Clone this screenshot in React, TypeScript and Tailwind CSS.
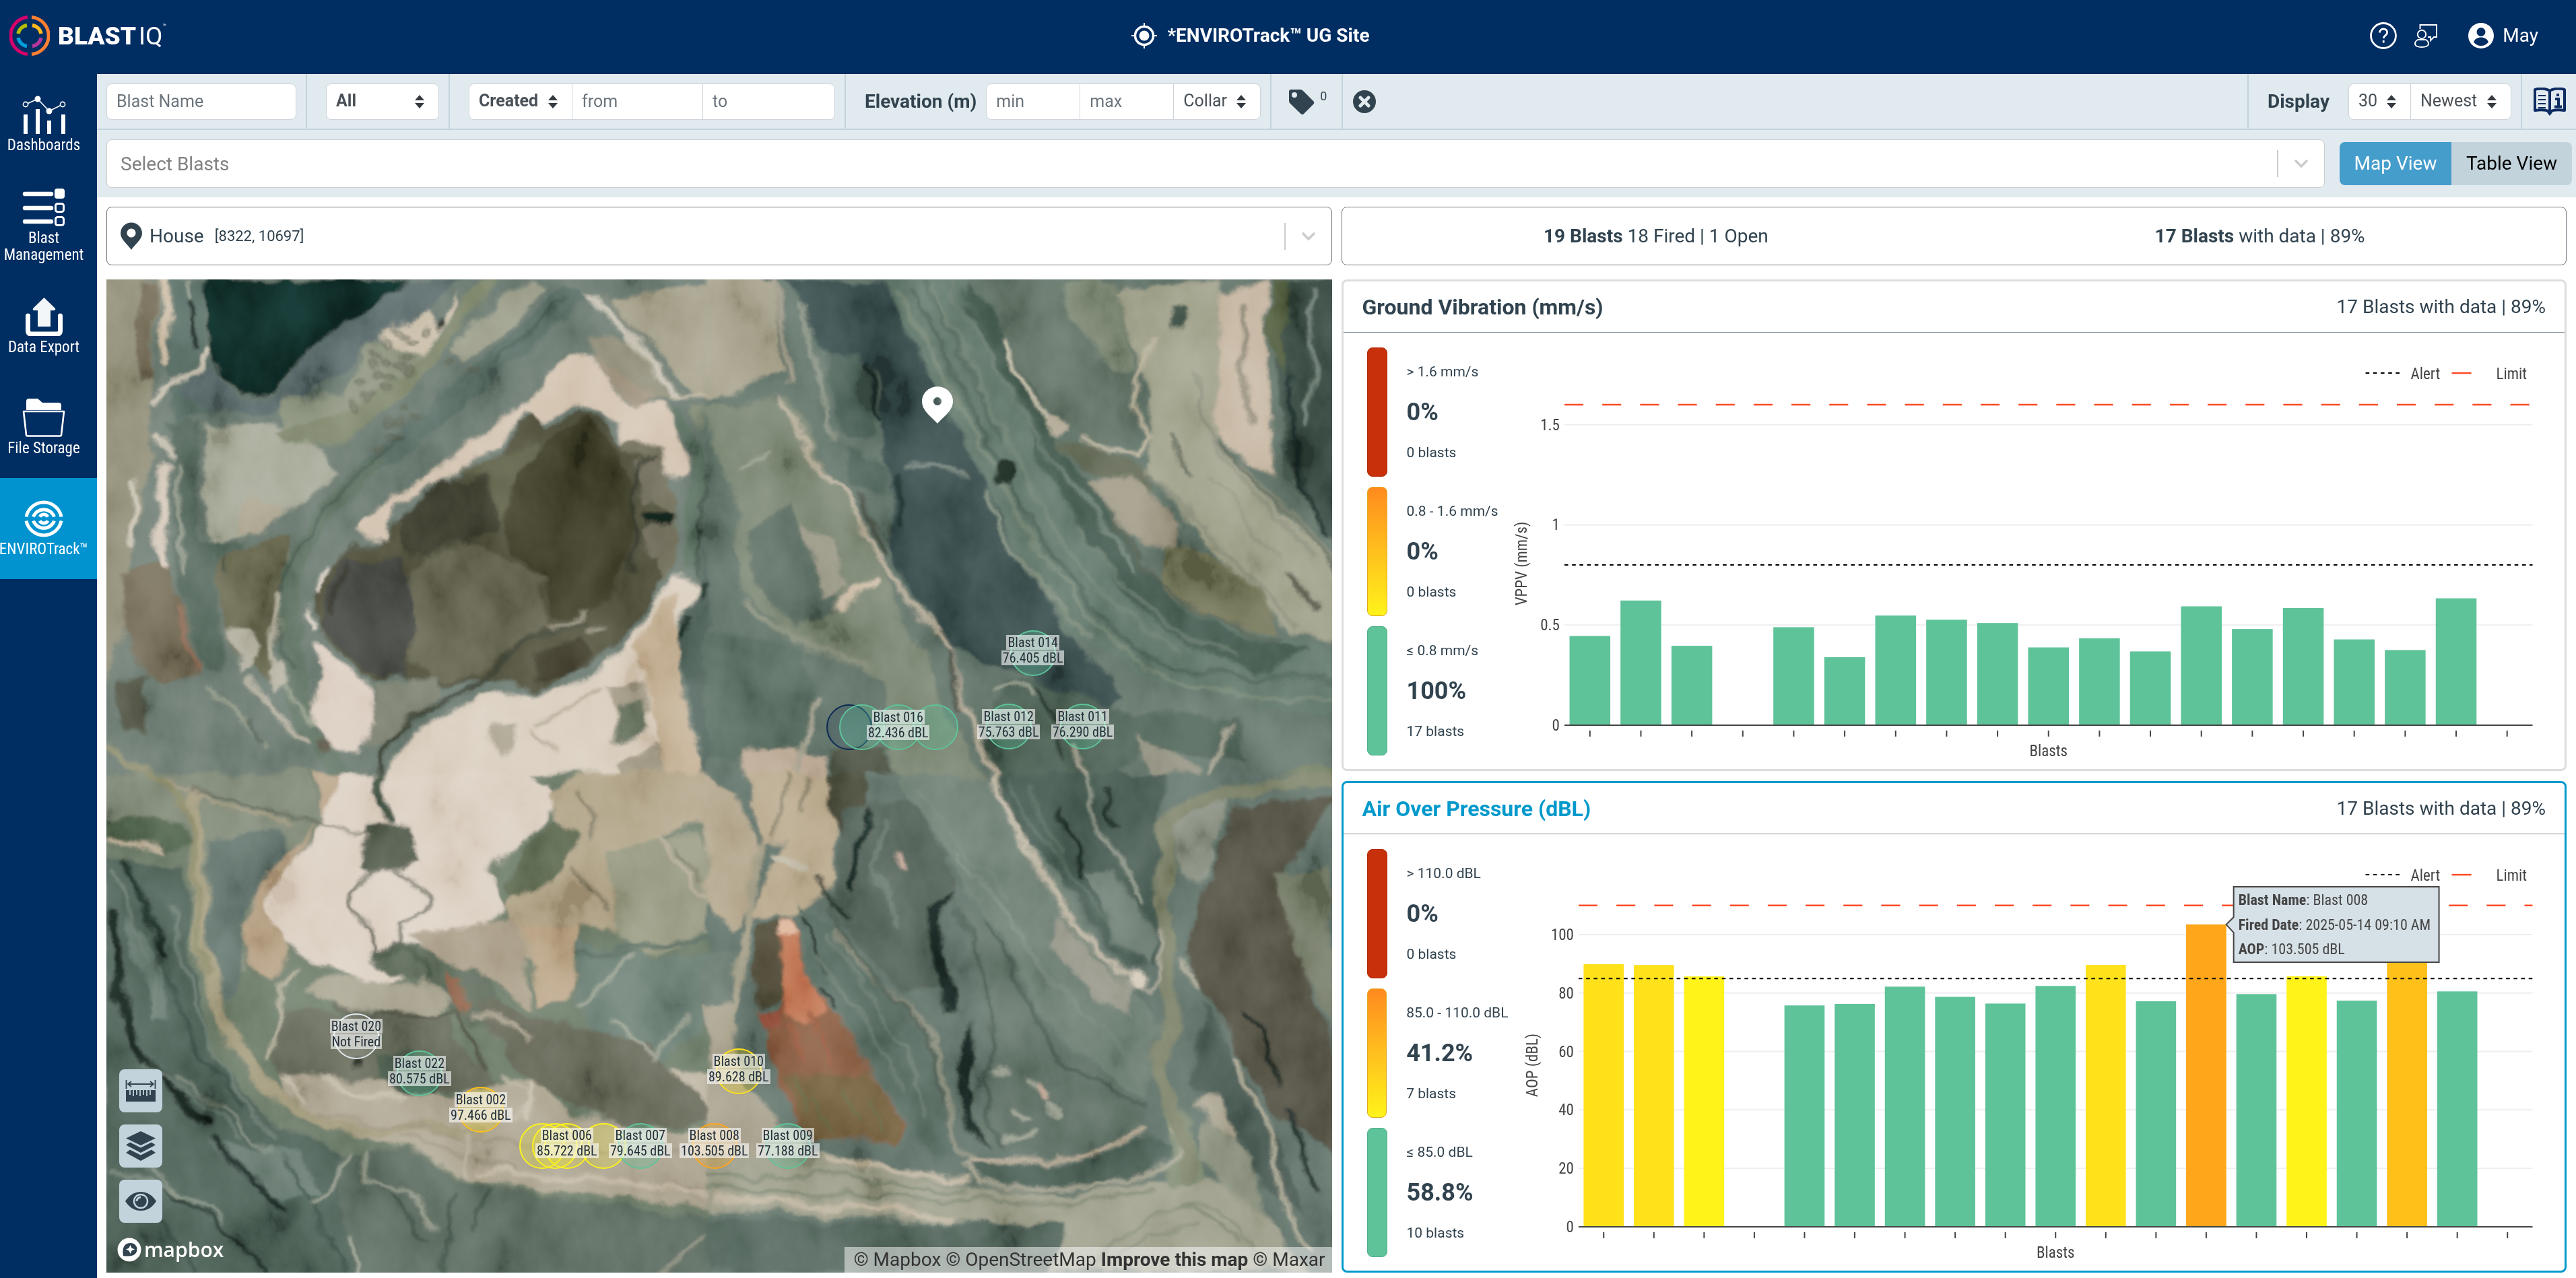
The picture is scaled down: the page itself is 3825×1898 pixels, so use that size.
import React from "react";

const FONT = "font-[Roboto,'Liberation_Sans',sans-serif]";
const CONDENSED = "font-['Roboto_Condensed',Roboto,sans-serif]";

/* ---------- header ---------- */

function BrandMark() {
  return (
    <svg viewBox="0 0 60 60" className="h-[60px] w-[60px]" fill="none" aria-hidden="true">
      <path d="M27 2.6A27.5 27.5 0 0 0 27 57.4" stroke="#d6006c" strokeWidth="5" />
      <path d="M33 2.6A27.5 27.5 0 0 1 33 57.4" stroke="#ff7f32" strokeWidth="5" />
      <path d="M26 14.5A16 16 0 0 0 13 27" stroke="#b5bd00" strokeWidth="5.5" />
      <path d="M34 14.5A16 16 0 0 1 47 27" stroke="#ffb81c" strokeWidth="5.5" />
      <path d="M26 45.5A16 16 0 0 1 13 33" stroke="#009ddb" strokeWidth="5.5" />
      <path d="M34 45.5A16 16 0 0 0 47 33" stroke="#b5379c" strokeWidth="5.5" />
    </svg>
  );
}

function Header() {
  return (
    <header className="grid h-[110px] shrink-0 grid-cols-3 items-center bg-[#002d62] pb-1 text-white">
      <a href="#home" className="flex items-center gap-3 pl-3.5" aria-label="BlastIQ">
        <BrandMark />
        <span className="flex items-center text-[37px] leading-none">
          <span className="font-black">BLAST</span>
          <span className="pl-1">IQ</span>
          <span className="self-start text-[9px]">™</span>
        </span>
      </a>
      <div className="flex items-center justify-center gap-3.5 pr-28">
        <svg viewBox="0 0 40 40" className="h-10 w-10" fill="none" aria-hidden="true">
          <circle cx="20" cy="20" r="13.5" stroke="#fff" strokeWidth="3.5" />
          <circle cx="20" cy="20" r="7.5" fill="#fff" />
          <path d="M20 1v6M20 33v6M1 20h6M33 20h6" stroke="#fff" strokeWidth="2" />
        </svg>
        <h1 className="text-[28px] leading-none font-bold whitespace-nowrap">*ENVIROTrack™ UG Site</h1>
      </div>
      <div className="flex items-center justify-end pr-14">
        <button type="button" aria-label="Help" className="mr-6">
          <svg viewBox="0 0 42 42" className="h-[42px] w-[42px]" fill="none" aria-hidden="true">
            <circle cx="21" cy="21" r="18.5" stroke="#fff" strokeWidth="2.8" />
            <path d="M15.5 16.5c0-3.5 2.4-5.5 5.6-5.5s5.6 2 5.6 5c0 4.600-5.500 4.500-5.500 9" stroke="#fff" strokeWidth="2.8" />
            <path d="M21.200 28v3.500" stroke="#fff" strokeWidth="2.8" />
          </svg>
        </button>
        <button type="button" aria-label="Feedback" className="mr-11">
          <svg viewBox="0 0 36 38" className="h-[38px] w-9" fill="none" stroke="#fff" strokeWidth="2" aria-hidden="true">
            <path d="M9.500 9V3H34v18h-4l-5 5v-5h-4" />
            <circle cx="12" cy="17" r="6.200" />
            <path d="M6 25h12c2.500 1.500 4 4 4 6 0 3-4 5-10 5s-10-2-10-5c0-2 1.500-4.500 4-6z" />
          </svg>
        </button>
        <button type="button" className="flex items-center gap-3 text-[28px] leading-none">
          <svg viewBox="0 0 40 40" className="h-10 w-10" aria-hidden="true">
            <circle cx="20" cy="20" r="19" fill="#fff" />
            <circle cx="20" cy="14.500" r="6.500" fill="#002d62" />
            <path d="M9 29.500c2-5 6-7 11-7s9 2 11 7c-2.500 3.500-6.500 5.500-11 5.500s-8.500-2-11-5.500z" fill="#002d62" />
          </svg>
          May
        </button>
      </div>
    </header>
  );
}

/* ---------- sidebar ---------- */

const navIcons: Record<string, React.ReactNode> = {
  dashboards: (
    <g>
      <path d="M5 13L23 5L40 23L60 13" stroke="#fff" strokeWidth="1.600" fill="none" />
      <circle cx="5" cy="13" r="3.600" fill="#002d62" stroke="#fff" strokeWidth="1.600" />
      <circle cx="23" cy="5" r="4.500" fill="#fff" />
      <circle cx="40" cy="23" r="4.500" fill="#fff" />
      <circle cx="60" cy="13" r="3.600" fill="#002d62" stroke="#fff" strokeWidth="1.600" />
      <path d="M2 28h6v29H2zM20 20h6v37h-6zM37 37h6v20h-6zM58 28h6v29h-6z" fill="#fff" />
    </g>
  ),
  management: (
    <g>
      <path d="M4 8h39M4 29h39M4 49h39" stroke="#fff" strokeWidth="6.500" strokeLinecap="round" />
      <rect x="48" y="0" width="15" height="15" rx="4" fill="#fff" />
      <rect x="49.500" y="22.500" width="12" height="12" rx="3" fill="none" stroke="#fff" strokeWidth="3" />
      <rect x="49.500" y="42.500" width="12" height="12" rx="3" fill="none" stroke="#fff" strokeWidth="3" />
    </g>
  ),
  exporting: (
    <g>
      <path d="M8.500 27v22q0 5 5 5h38q5 0 5-5V27" stroke="#fff" strokeWidth="7" strokeLinecap="round" fill="none" />
      <path d="M32.500 0L49 16q1 3-2 3h-5v24H23V19h-5q-3 0-2-3z" fill="#f3f6f8" />
    </g>
  ),
  storage: (
    <g>
      <path d="M6 17V4q0-4 4-4h13l7 6h24q4 0 4 4v7z" fill="#fff" />
      <path d="M2 19h60l-4 35q0 1.500-2 1.500H8q-2 0-2-1.500z" fill="none" stroke="#fff" strokeWidth="2.600" strokeLinejoin="round" />
    </g>
  ),
  enviro: (
    <g fill="none" stroke="#fff" strokeWidth="5">
      <path d="M6 25.500A26.500 26.500 0 0 1 58 25.500M58 31.500A26.500 26.500 0 0 1 6 31.500" />
      <path d="M16.500 25.500A16.500 16.500 0 0 1 47.500 25.500M47.500 31.500A16.500 16.500 0 0 1 16.500 31.500" />
      <path d="M26 25.500A7 7 0 0 1 38 25.500M38 31.500A7 7 0 0 1 26 31.500" />
    </g>
  ),
};

const navItems = [
  { icon: "dashboards", label: "Dashboards" },
  { icon: "management", label: "Blast Management" },
  { icon: "exporting", label: "Data Export" },
  { icon: "storage", label: "File Storage" },
  { icon: "enviro", label: "ENVIROTrack™", active: true },
];

function Sidebar() {
  return (
    <nav className={"w-36 shrink-0 bg-[#002d62] text-white " + CONDENSED}>
      {navItems.map((n) => (
        <a
          key={n.icon}
          href={"#" + n.icon}
          className={
            "flex h-[150px] flex-col items-center justify-center gap-1 pr-3.5 text-center text-[23px] leading-[25px] " +
            (n.active ? "bg-[#0093d0]" : "")
          }
        >
          <svg viewBox="0 0 65 57" className="h-[57px] w-[65px]" aria-hidden="true">
            {navIcons[n.icon]}
          </svg>
          <span>{n.label}</span>
        </a>
      ))}
    </nav>
  );
}

/* ---------- filter bar ---------- */

function PickList({ label, value, className }: { label: string; value: string; className: string }) {
  return (
    <span className={"relative block h-full " + className}>
      <select
        aria-label={label}
        className="h-full w-full appearance-none bg-transparent pb-0.5 pl-3.5 text-[#495057] outline-none"
        defaultValue={value}
      >
        <option>{value}</option>
      </select>
      <svg viewBox="0 0 16 20" className="pointer-events-none absolute top-1/2 right-5 h-5 w-4 -translate-y-1/2" aria-hidden="true">
        <path d="M8 0L15 8H1zM8 20L1 12H15z" fill="#343a40" />
      </svg>
    </span>
  );
}

const box = "flex h-[54px] overflow-hidden rounded-lg border border-[#ced4da] bg-white";
const cell = "flex h-full items-center border-[#c2d3dc]";
const field = "h-full min-w-0 bg-transparent px-3.5 placeholder-[#6c757d] outline-none";

function Chevron() {
  return (
    <span className="flex items-center">
      <span className="h-10 w-0.5 bg-[#cccccc]" />
      <svg viewBox="0 0 24 24" className="mx-[22px] h-6 w-6" fill="none" stroke="#cccccc" strokeWidth="3.600" strokeLinecap="round" aria-hidden="true">
        <path d="M4 8l8 8 8-8" />
      </svg>
    </span>
  );
}

function Filters() {
  return (
    <div className="bg-[#e1eaef]">
      <form className="flex h-[83px] items-center border-b-2 border-[#c2d3dc] text-[25px] text-[#31434f]">
        <div className={cell + " border-r-2 px-3.5"}>
          <div className={box}>
            <input aria-label="Blast Name" placeholder="Blast Name" className={field + " w-[280px]"} />
          </div>
        </div>
        <div className={cell + " border-r-2 pr-3.5 pl-7"}>
          <div className={box + " font-bold"}>
            <PickList label="Status" value="All" className="w-[166px]" />
          </div>
        </div>
        <div className={cell + " border-r-2 pr-3.5 pl-7"}>
          <div className={box}>
            <PickList label="Date type" value="Created" className="w-[152px] font-bold" />
            <input aria-label="From date" placeholder="from" className={field + " w-[195px] border-x border-[#ced4da]"} />
            <input aria-label="To date" placeholder="to" className={field + " w-[195px]"} />
          </div>
        </div>
        <div className={cell + " gap-3.5 border-r-2 pr-3.5 pl-7"}>
          <span className="text-[28px] font-bold whitespace-nowrap">Elevation (m)</span>
          <div className={box}>
            <input aria-label="Minimum elevation" placeholder="min" className={field + " w-[138px]"} />
            <input aria-label="Maximum elevation" placeholder="max" className={field + " w-[140px] border-x border-[#ced4da]"} />
            <PickList label="Elevation reference" value="Collar" className="w-[128px]" />
          </div>
        </div>
        <div className={cell + " border-r-2 pr-[22px] pl-6"}>
          <button type="button" className="flex items-start gap-2" aria-label="Tags: 0">
            <svg viewBox="0 0 40 40" className="h-10 w-10" aria-hidden="true">
              <path d="M2 5q0-3 3-3h14q2 0 4 2l15 15q2.500 2.500 0 5L24 38q-2 2-4.500 0L4 23q-2-2-2-4z" fill="#31434f" />
              <circle cx="10" cy="10" r="4" fill="#e1eaef" />
            </svg>
            <span className="text-lg leading-6">0</span>
          </button>
        </div>
        <div className={cell + " px-3.5"}>
          <button type="button" aria-label="Clear filters">
            <svg viewBox="0 0 36 36" className="h-9 w-9" aria-hidden="true">
              <circle cx="18" cy="18" r="17" fill="#31434f" />
              <path d="M12 12l12 12M24 12L12 24" stroke="#e1eaef" strokeWidth="5" strokeLinecap="round" />
            </svg>
          </button>
        </div>
        <div className="flex-1" />
        <div className={cell + " gap-7 border-l-2 pr-3.5 pl-7"}>
          <span className="text-[28px] font-bold">Display</span>
          <div className={box}>
            <PickList label="Display count" value="30" className="w-[92px] border-r border-[#ced4da]" />
            <PickList label="Display order" value="Newest" className="w-[148px]" />
          </div>
        </div>
        <div className={cell + " border-l-2 pr-3.5 pl-4"}>
          <button type="button" aria-label="Guide">
            <svg viewBox="0 0 50 42" className="h-[42px] w-[50px]" fill="none" stroke="#0f2d62" aria-hidden="true">
              <path d="M25 5C20 1 8 1 3 3v31c7-1 17-1 22 2 5-3 15-3 22-2V3c-5-2-17-2-22 2z" strokeWidth="4" strokeLinejoin="round" />
              <path d="M25 5v31" strokeWidth="4" />
              <path d="M8 12h11M8 18h11M8 24h11M8 30h11" strokeWidth="2.200" />
              <path d="M37 9v4M33 17h5v11M32 28.500h11" strokeWidth="4" />
              <path d="M21 37l4 5 4-5z" fill="#0f2d62" stroke="none" />
            </svg>
          </button>
        </div>
      </form>
      <div className="flex h-[100px] items-center pr-1.5 pl-3.5 text-[28px]">
        <div className="flex h-[72px] flex-1 items-center justify-between rounded-lg border border-[#cccccc] bg-white pl-5 text-[#808080]">
          <input aria-label="Select Blasts" placeholder="Select Blasts" className="h-full flex-1 bg-transparent placeholder-[#808080] outline-none" />
          <Chevron />
        </div>
        <div className="ml-[22px] flex h-16 overflow-hidden rounded-lg">
          <button type="button" className="w-[166px] bg-[#459dcb] text-white">Map View</button>
          <button type="button" className="w-[179px] bg-[#c2d3dc] text-black">Table View</button>
        </div>
      </div>
    </div>
  );
}

/* ---------- map ---------- */

function Shapes({ items }: { items: [string, string][] }) {
  return (
    <>
      {items.map(([fill, d], i) => (
        <path key={i} d={d} fill={fill} />
      ))}
    </>
  );
}

function Trails({ items }: { items: [string, number, string][] }) {
  return (
    <g fill="none" strokeLinejoin="round" strokeLinecap="round">
      {items.map(([stroke, w, d], i) => (
        <path key={i} d={d} stroke={stroke} strokeWidth={w} />
      ))}
    </g>
  );
}

function NorthWest() {
  return (
    <g transform="translate(61.5 164) scale(.2614 .196)">
      <Shapes
        items={[
          ["#6a796f", "M0 0H1600V1600H0Z"],
          ["#908d77", "M0 0L135 31L110 400L120 560L90 800L60 1100L0 1300Z"],
          ["#6f6853", "M90 31L130 31L112 360L85 360ZM50 950L150 900L190 1050L230 1260L150 1300L60 1200Z"],
          ["#566c64", "M160 31L245 31L250 240L300 430L180 480L150 300Z"],
          ["#57695d", "M155 480L230 480L225 850L330 850L280 1000L280 1240L230 1230L180 980Z"],
          ["#5a6b6a", "M720 31L860 31L760 110L640 240L520 360L400 440L240 440L180 380L250 300L320 400L400 390L490 240Z"],
          ["#0d2723", "M245 31L720 31L640 110L490 240L400 380L320 388L275 330L255 230Z"],
          ["#a5a796", "M245 480L400 470L520 560L560 620L430 760L320 830L250 850L240 740Z"],
          ["#aba48f", "M350 720L440 740L360 830L300 820ZM390 880L440 880L420 940L370 930Z"],
          ["#8a917b", "M420 400L560 400L620 240L700 220L780 260L700 400L560 470L430 520Z"],
          ["#c9bda8", "M650 220L750 110L790 190L840 90L830 150L740 270Z"],
          ["#7b8469", "M890 31L930 31L800 260L680 420L560 540L430 540L400 500L560 450L700 330L820 170Z"],
          ["#9a9c88", "M930 80L1000 31L1040 60L960 180L850 280L820 250Z"],
          ["#a5a08a", "M1180 110L1300 60L1568 31L1568 400L1380 390L1280 230Z"],
          ["#828b74", "M1380 420L1568 400L1568 600L1420 560Z"],
          ["#8d8a76", "M1140 200L1240 210L1330 400L1240 420L1160 300Z"],
          ["#d3c3b0", "M1100 260L1150 280L1230 420L1320 420L1340 500L1370 640L1340 650L1220 560L1210 480L1100 430L1030 470L1000 430L930 540L800 640L680 740L660 860L590 820L600 790L780 620L900 500L1000 400L1060 300Z"],
          ["#9b8f7a", "M1150 270L1200 290L1290 400L1240 430Z"],
          ["#6c6a55", "M1230 520L1300 560L1340 700L1340 900L1320 960L1210 1000L1180 600Z"],
          ["#4b4b37", "M1010 440L1040 485L1110 450L1180 480L1220 560L1290 590L1260 680L1330 760L1280 850L1310 950L1290 1040L1210 1140L1120 1250L1000 1300L900 1270L780 1300L700 1260L630 1280L560 1190L500 1110L490 1020L550 920L590 860L660 860L700 760L800 650L940 560L980 470Z"],
          ["#56583f", "M830 620L950 560L1010 540L1030 640L950 680L910 800L900 640Z"],
          ["#37382a", "M700 760L790 650L900 640L920 820L820 850L760 900L700 880Z"],
          ["#3b3b28", "M1050 520L1130 470L1210 560L1240 700L1230 900L1200 1000L1120 1080L1050 1080L1020 940L950 880L930 780L950 660Z"],
          ["#3c403b", "M560 920L700 890L740 1000L710 1260L640 1265L560 1180L500 1100Z"],
          ["#5e5e4b", "M730 930L860 840L930 900L1030 960L1010 1020L1050 1100L960 1160L900 1250L780 1290L720 1200Z"],
          ["#6c6857", "M1250 600L1310 600L1320 690L1260 730ZM1255 810L1300 780L1320 860L1270 890Z"],
          ["#393527", "M1020 1180L1120 1150L1150 1200L1100 1260L1000 1270Z"],
          ["#101f18", "M1260 755L1340 750L1330 795L1270 785Z"],
          ["#7d8272", "M630 1290L780 1270L800 1330L720 1400L660 1470L620 1480Z"],
          ["#dbcdc0", "M490 1150L560 1220L620 1290L630 1400L610 1500L530 1500L480 1380L520 1250Z"],
          ["#d8ccbc", "M720 1440L880 1330L1000 1310L1130 1290L1200 1180L1290 1060L1340 940L1390 990L1330 1150L1350 1280L1400 1568L660 1568Z"],
          ["#c2ae92", "M1240 1160L1340 1000L1350 1280L1400 1568L1310 1568L1290 1350Z"],
          ["#a8a08c", "M900 1430L970 1410L960 1500L920 1520ZM1180 1290L1270 1280L1290 1380L1210 1420ZM1200 1530L1300 1460L1320 1568L1210 1568Z"],
          ["#687361", "M1210 1360L1270 1340L1270 1410L1200 1460Z"],
          ["#4e6059", "M1340 1150L1400 950L1420 780L1568 820L1568 1568L1400 1568L1370 1300Z"],
          ["#909481", "M1470 620L1568 560L1568 720L1490 760Z"],
          ["#67674f", "M270 900L440 820L420 1100L390 1280L300 1200Z"],
          ["#55584a", "M30 1280L110 1260L110 1440L50 1440Z"],
          ["#b4b0a0", "M290 1110L360 1110L370 1190L320 1260ZM385 1250L430 1200L440 1280L400 1320Z"],
        ]}
      />
      <Trails
        items={[
          ["#5a6e66", 60, "M1090 80C1040 160 960 240 900 310S760 480 640 600"],
          ["#607363", 46, "M640 600C540 700 470 820 445 960S450 1200 470 1400L560 1568"],
          ["#3f5248", 6, "M1080 100C1020 180 960 240 920 290M700 520C580 640 500 760 440 920S420 1180 450 1240"],
          ["#c9b9a2", 20, "M146 31L152 290"],
          ["#d3c6b6", 20, "M142 590L148 920"],
          ["#a8ad9c", 6, "M170 590L195 940M200 31L215 200"],
          ["#c9c2b1", 14, "M82 660L80 840M130 520L160 560M120 420L150 370L230 320L250 240"],
          ["#13231c", 12, "M205 110L216 240"],
          ["#9a6f5a", 8, "M180 1050L220 1240"],
          ["#c8c2b2", 16, "M1130 80L1230 200L1340 400"],
          ["#7d8272", 6, "M1160 80L1250 200L1350 390"],
          ["#c3b9a4", 10, "M1330 400L1480 380L1568 320"],
          ["#617565", 34, "M1345 460C1400 560 1400 640 1380 740L1375 920"],
          ["#3f5347", 8, "M1430 560C1400 680 1410 800 1390 960"],
          ["#7d8a77", 20, "M1568 1060C1500 960 1470 860 1510 740S1440 620 1430 560"],
          ["#2e3128", 10, "M1290 590C1220 640 1230 740 1240 800S1230 880 1240 940"],
          ["#e0d6c9", 10, "M525 945L505 1000M475 1045L485 1095"],
          ["#2d2f25", 14, "M575 940L530 1060"],
          ["#3a4031", 13, "M1120 1105C1050 1130 990 1130 955 1190S920 1260 870 1295C800 1350 720 1390 680 1450S655 1500 650 1568"],
          ["#8e8874", 12, "M1155 1110L1130 1130M1130 1050L1110 1100L1050 1110"],
          ["#b2ae9d", 14, "M410 1010L400 1200L400 1290M340 1280L480 1480"],
          ["#9aa08c", 8, "M250 1290L330 1400L380 1480M430 1290L500 1420"],
          ["#2f4239", 6, "M340 1400L370 1470M285 900L295 940"],
          ["#8f8e70", 20, "M0 1480L110 1568"],
          ["#a89f8a", 8, "M1020 1420C1060 1360 1140 1350 1170 1310M1010 1440L1060 1500"],
          ["#1d2e28", 14, "M1400 980L1395 1020M1370 1090L1355 1140M1410 830L1430 850"],
        ]}
      />
      <g fill="none" stroke="#5b6050" strokeWidth="7">
        {[
          [700, 190], [720, 212], [755, 186], [672, 228], [640, 270], [662, 290], [630, 300], [690, 300],
          [710, 278], [605, 350], [640, 335], [665, 345], [585, 425], [618, 398], [655, 376], [680, 470],
          [705, 470], [735, 458], [712, 430], [684, 518], [650, 548], [815, 288], [865, 320], [710, 318],
        ].map(([x, y]) => (
          <circle key={x + "-" + y} cx={x} cy={y} r="9" />
        ))}
      </g>
      <circle cx="795" cy="168" r="14" fill="#2d3029" />
      <circle cx="520" cy="1480" r="18" fill="#5a5546" />
    </g>
  );
}

function NorthEast() {
  return (
    <g transform="translate(430.4 164) scale(.2458 .2092)">
      <Shapes
        items={[
          ["#5f7166", "M0 0H1600V1600H0Z"],
          ["#a5a08a", "M0 0L165 31L190 310L0 380Z"],
          ["#788370", "M0 400L200 370L420 830L600 1290L740 1600L460 1600L440 1200L200 1050L90 940L70 820L80 700L20 520Z"],
          ["#586a5f", "M100 760L200 700L290 860L330 980L220 1050L120 920Z"],
          ["#9b9987", "M230 740L310 780L350 930L290 950Z"],
          ["#36494a", "M190 31L440 31L520 210L620 450L700 600L760 780L880 1040L1030 1240L960 1300L880 1250L780 1180L650 1120L590 1100L470 860L440 540L420 300L300 240L250 160Z"],
          ["#4b6056", "M290 240L380 260L420 480L330 470ZM340 500L440 560L440 660L360 640Z"],
          ["#5f7467", "M440 31L660 31L740 220L850 470L1000 720L1130 930L1300 1050L1568 1100L1568 1300L1300 1250L1100 1200L900 1060L760 780L620 450L500 190Z"],
          ["#42594d", "M660 31L720 120L860 470L960 640L1060 800L1160 950L1300 1060L1500 1110L1400 1180L1250 1130L1050 980L850 620L760 380L640 120Z"],
          ["#5e6f64", "M680 31L1000 31L1060 300L1060 500L960 500L860 440L760 260Z"],
          ["#7c8773", "M880 31L1010 31L1070 280L1000 300L900 150Z"],
          ["#5b644f", "M870 500L960 510L1100 590L1110 650L990 620Z"],
          ["#9e9f88", "M1010 60L1270 31L1260 500L1400 680L1568 880L1568 1090L1450 1060L1300 880L1100 600L1090 300Z"],
          ["#c4b49f", "M1270 60L1380 31L1390 430L1410 600L1340 560L1260 480Z"],
          ["#3b4e45", "M1390 31L1568 31L1568 820L1430 540Z"],
          ["#535f40", "M1390 31L1440 31L1430 300L1390 200Z"],
          ["#9a937f", "M940 620L1060 600L1180 740L1150 840L1050 780Z"],
          ["#737558", "M1130 820L1240 820L1360 930L1410 1060L1300 1040L1140 930Z"],
          ["#566a5e", "M0 1050L240 1100L260 1240L230 1400L0 1420Z"],
          ["#bba994", "M80 1390L290 1400L300 1568L90 1568Z"],
          ["#4a4f40", "M300 1390L440 1390L470 1568L310 1568Z"],
          ["#4c5e53", "M740 1200L830 1200L1060 1300L1320 1300L1330 1430L1060 1400L960 1568L760 1568L680 1400Z"],
          ["#8e8d7c", "M1060 1350L1220 1450L1240 1568L1110 1568Z"],
          ["#6e7a5d", "M1180 1568L1350 1480L1568 1430L1568 1568Z"],
          ["#3c5044", "M1150 110L1185 110L1180 180L1145 180Z"],
        ]}
      />
      <Trails
        items={[
          ["#7a8a78", 8, "M470 60C560 240 640 420 720 600S880 960 1050 1120S1350 1230 1568 1240"],
          ["#6d8070", 10, "M560 60C640 280 740 470 830 680S1000 990 1180 1110"],
          ["#465b51", 9, "M510 60C600 280 660 420 760 640S900 920 1020 1060S1300 1190 1568 1190"],
          ["#7b8a79", 12, "M690 640C740 800 860 980 960 1080"],
          ["#697c6e", 14, "M600 31C660 180 720 320 800 460S960 700 1060 860"],
          ["#4b6055", 7, "M540 31C600 190 660 340 730 500M640 60C700 240 780 420 880 600"],
          ["#718373", 6, "M920 740C1000 900 1120 1060 1300 1120"],
          ["#c2bea9", 13, "M740 210L760 270L800 370L860 460"],
          ["#b5ad9a", 40, "M850 440L870 460"],
          ["#b9b39c", 12, "M930 490L1000 520L1075 545L1092 490L1058 400L1065 320L1110 200"],
          ["#8f9786", 9, "M225 100L280 290L300 440L320 500"],
          ["#b7ad99", 13, "M180 380L260 540L350 670L430 840L500 960L600 1110L645 1270L740 1568"],
          ["#4a4f44", 14, "M380 670L445 820M600 1120L635 1270"],
          ["#1f312d", 14, "M398 290L405 370L425 430M460 600L480 730"],
          ["#1d2d28", 10, "M820 1220L880 1330L880 1430"],
          ["#9ba392", 10, "M80 560L160 530M720 1220L760 1210L810 1230"],
          ["#6f7f76", 12, "M490 580L560 570L640 600"],
          ["#c9b9a3", 22, "M330 970L410 910"],
          ["#89907d", 14, "M90 960C160 1060 280 1100 400 1160"],
          ["#a09a88", 12, "M170 31L210 330"],
          ["#4f5a4c", 9, "M1268 500C1350 620 1480 740 1560 870M1150 480L1200 600M1000 720C1100 900 1260 1060 1420 1080"],
          ["#868b78", 9, "M1120 620C1240 760 1340 900 1460 1040M1200 300L1260 520L1500 840"],
          ["#8a8d79", 6, "M1320 560C1400 660 1480 760 1568 860M1240 600L1420 840"],
          ["#56584a", 18, "M1450 900L1515 980"],
          ["#1e2d2b", 14, "M1440 300L1445 480L1480 660L1540 780"],
          ["#76857c", 12, "M1500 60L1500 300L1480 460"],
          ["#a6a391", 12, "M270 1260L210 1500M1300 1320L1240 1480M910 1400L960 1568"],
          ["#8c8573", 14, "M1330 100L1320 300L1350 440"],
        ]}
      />
      <ellipse cx="735" cy="588" rx="28" ry="38" fill="#1b2923" />
    </g>
  );
}

function SouthWest() {
  return (
    <g transform="translate(61.5 471.4) scale(.2614 .1956)">
      <Shapes
        items={[
          ["#6b7966", "M0 0H1600V1600H0Z"],
          ["#7e8775", "M0 0L480 0L520 140L420 300L330 480L350 620L260 640L230 200L0 160Z"],
          ["#53664f", "M0 140L190 150L210 230L0 200Z"],
          ["#5e716a", "M250 200L420 170L440 260L330 420L330 640L280 720L250 560Z"],
          ["#4c5f55", "M0 260L190 280L220 640L270 900L420 1100L560 1180L620 1600L0 1600Z"],
          ["#65786e", "M60 440L120 520L160 760L130 760L70 560ZM240 1140L460 1180L520 1300L420 1330Z"],
          ["#dbcfc1", "M500 0L1000 0L1060 60L1040 150L900 300L940 420L820 520L760 560L730 620L640 650L540 620L420 530L380 400L450 260L520 140Z"],
          ["#b7a286", "M330 480L380 330L500 140L450 260L380 400L430 560L410 650L350 580ZM490 0L560 0L520 120Z"],
          ["#b0a387", "M1040 60L1120 0L1568 0L1568 130L1480 200L1400 150L1290 200L1200 480L1110 480L1060 560L960 560L940 400L1090 250Z"],
          ["#94967e", "M1180 240L1400 180L1470 480L1260 560L1200 480Z"],
          ["#5c6750", "M1060 150L1125 180L1060 320L960 385L935 350L990 220Z"],
          ["#b8a284", "M980 470L1110 480L1090 700L1020 720Z"],
          ["#a89c86", "M720 500L960 440L1010 740L880 640L760 560Z"],
          ["#4f5848", "M610 160L720 170L745 260L690 300L610 295Z"],
          ["#5d6b5a", "M620 570L720 530L800 580L880 610L950 800L830 760L730 630Z"],
          ["#8c5f47", "M800 610L840 640L865 720L830 740Z"],
          ["#a6a18d", "M510 640L740 640L820 700L760 760L560 720L480 680Z"],
          ["#687c71", "M1110 520L1240 560L1460 560L1470 700L1400 780L1300 900L1200 880L1100 720Z"],
          ["#636858", "M420 730L800 750L830 850L960 1000L800 990L640 960L420 940L400 850Z"],
          ["#636554", "M870 700L1000 760L1280 840L1310 900L1440 1050L1380 1100L1200 1090L1030 980L950 880Z"],
          ["#ada591", "M420 930L640 960L820 1010L1000 940L1100 1060L1300 1110L1568 1130L1568 1350L1300 1330L900 1280L700 1160L550 1110L430 1030Z"],
          ["#59675c", "M560 1180L700 1170L900 1290L1300 1360L1568 1370L1568 1600L580 1600Z"],
          ["#4b4b37", "M1500 620L1568 450L1568 900L1520 800Z"],
          ["#46584c", "M1480 200L1540 240L1500 470L1470 440ZM1420 0L1500 0L1560 100L1520 180Z"],
          ["#9f5c48", "M1530 740L1568 730L1568 830L1545 830Z"],
          ["#bcb3a0", "M1430 740L1460 740L1460 850L1420 850ZM1320 910L1460 960L1540 1090L1450 1080Z"],
          ["#485a4b", "M630 880L700 860L790 900L780 1000L700 1000L640 960Z"],
        ]}
      />
      <Trails
        items={[
          ["#a29a7c", 32, "M210 60C240 180 210 380 240 560S320 900 440 1030S700 1080 880 1110"],
          ["#8b8a68", 14, "M120 0C190 50 216 120 218 220S214 440 246 620"],
          ["#a39a80", 10, "M160 20L290 100L440 150"],
          ["#44493c", 6, "M200 40L370 110L500 145L620 190"],
          ["#15241e", 24, "M20 430C50 560 30 700 70 800S160 960 240 1080"],
          ["#1c2d26", 16, "M60 270L110 420L150 560"],
          ["#1b2b25", 18, "M260 1130L330 1230L420 1360"],
          ["#22332c", 12, "M160 1290L300 1430L380 1560"],
          ["#6f8176", 7, "M30 300L100 520L130 760M160 400L220 720L300 960L420 1140M110 900L230 1010L330 1130"],
          ["#8a9586", 7, "M180 940L300 1060L400 1180M13 1240L100 1250L220 1320M60 1100L140 1250L280 1380"],
          ["#33473e", 8, "M150 620L220 860L330 1040M430 1200L500 1360L560 1560M60 1300L180 1460L220 1560"],
          ["#475849", 22, "M652 0L648 80L662 150"],
          ["#585a4d", 9, "M630 300C560 380 590 430 615 470S615 560 640 560L700 540L700 460L750 430C775 380 730 360 690 300"],
          ["#4b5a4c", 16, "M630 560L720 550L760 640"],
          ["#c8b8a2", 14, "M20 210L150 225"],
          ["#b3ae99", 10, "M450 610C400 700 410 800 395 880"],
          ["#4c4d3f", 10, "M830 740L860 830L890 920M540 720L690 760L820 740"],
          ["#b5ac98", 10, "M1290 200L1480 480L1470 850M870 740L1000 820"],
          ["#5a6d61", 18, "M1200 540L1440 500M1110 560L1230 560"],
          ["#9ca392", 10, "M1230 570L1110 740M1200 770L1290 880L1360 760"],
          ["#958d78", 7, "M500 1060L900 1140L1568 1200M700 1130L1000 1250L1568 1300"],
          ["#c3b8a5", 18, "M880 1240L1200 1270L1568 1320"],
          ["#9aa090", 9, "M580 1180L550 1280L490 1340M610 1180L620 1260L720 1290L780 1420M590 1568L580 1440"],
          ["#34483e", 8, "M820 1290L810 1420L800 1560M900 1300L860 1420M680 1300L760 1450"],
          ["#8f9280", 9, "M1430 1360L1420 1420L1310 1560"],
          ["#b9b29f", 10, "M940 940L1000 1000L960 1090M850 1110L845 1240"],
          ["#c4bdab", 14, "M440 940L470 1010M520 950L600 1000L700 1010M1000 960L990 1060"],
          ["#6e6a55", 7, "M1110 60L1160 130L1140 200M1340 240L1400 320M1100 300L1180 420"],
        ]}
      />
      <circle cx="585" cy="903" r="15" fill="#24261f" />
    </g>
  );
}

function SouthEast() {
  return (
    <g transform="translate(430.4 471.4) scale(.2458 .1956)">
      <Shapes
        items={[
          ["#5f7167", "M0 0H1600V1600H0Z"],
          ["#b2a58b", "M0 0L70 80L130 220L100 400L60 480L0 400Z"],
          ["#b8a88c", "M80 0L290 0L320 130L310 340L215 440L140 450L100 440L200 200L140 210Z"],
          ["#67786e", "M0 560L80 540L70 740L0 780Z"],
          ["#a49d89", "M0 720L70 720L70 900L180 1100L260 1130L260 1200L0 1180Z"],
          ["#4a4b3a", "M290 0L400 0L380 130L330 200Z"],
          ["#516056", "M340 110L560 60L620 400L560 420L600 640L480 680L380 540L310 400Z"],
          ["#4f4c39", "M120 470L180 460L190 700L130 730L100 620Z"],
          ["#576b60", "M230 400L330 480L440 660L570 840L620 1180L560 1200L500 1080L400 920L300 720L240 560Z"],
          ["#84583d", "M180 450L210 450L230 560L290 720L400 920L500 1100L480 1140L250 1130L170 980L150 800L190 700Z"],
          ["#c07552", "M180 460L212 450L226 560L262 640L285 730L240 780L195 740L190 600Z"],
          ["#dfb69b", "M180 455L210 450L218 510L184 510Z"],
          ["#6e5a38", "M180 950L400 930L490 1090L480 1135L250 1130Z"],
          ["#94513d", "M130 740L190 730L190 790L140 800Z"],
          ["#6c7d71", "M460 0L690 0L900 400L1130 780L1100 860L1090 1030L940 900L830 760L700 480L600 250Z"],
          ["#97978a", "M860 430L960 560L1060 660L1040 760L950 680L860 540Z"],
          ["#455950", "M700 0L1130 0L1110 600L1040 600L900 380L790 200Z"],
          ["#6b7a6f", "M940 300L1010 310L1110 500L1090 600L1010 520Z"],
          ["#5e7065", "M620 400L720 480L830 760L1080 1040L1060 1110L880 1190L720 1160L680 1100L700 850Z"],
          ["#8a9183", "M1150 120L1300 80L1240 300L1220 340L1160 280Z"],
          ["#4f4d40", "M1310 100L1568 60L1420 330L1500 700L1560 860L1568 1200L1400 1060L1270 760L1180 550L1240 330Z"],
          ["#747c68", "M1400 310L1540 280L1568 840L1490 650Z"],
          ["#485a53", "M1230 700L1310 880L1390 1080L1480 1360L1390 1300L1200 960Z"],
          ["#1c2b26", "M545 420L620 370L575 460L600 620L632 760L600 750L560 600ZM660 770L668 900L645 1050L705 1160L640 1100L615 1000L630 850Z"],
          ["#9c9d89", "M0 1190L300 1180L680 1300L900 1310L1100 1260L1200 1250L1350 1300L1480 1551L850 1551L880 1400L500 1390L0 1350Z"],
          ["#4a5d52", "M640 1210L900 1220L1080 1130L1150 1160L1100 1230L950 1280L700 1280Z"],
          ["#4f6258", "M0 1370L200 1390L500 1400L890 1400L840 1551L0 1551Z"],
          ["#7c8870", "M1140 1000L1200 1050L1230 1260L1150 1280Z"],
          ["#aaa491", "M1210 1030L1260 1000L1310 1120L1290 1160Z"],
          ["#8b917e", "M1230 1080L1330 1150L1400 1400L1300 1300L1220 1200Z"],
        ]}
      />
      <Trails
        items={[
          ["#a39d86", 20, "M140 220L100 420L75 640L50 860"],
          ["#c0b9a6", 30, "M180 250L230 280"],
          ["#7d775e", 8, "M200 10L170 190M240 10L230 120"],
          ["#96543a", 10, "M210 780L240 900M280 800L310 900M250 740L260 800"],
          ["#5f6340", 8, "M250 1000L300 1100M340 980L380 1090M410 1020L440 1110M220 960L240 1040"],
          ["#15251f", 10, "M240 440L260 500L300 610M260 310L350 450M280 660L310 730"],
          ["#172621", 18, "M395 120L380 220L360 350"],
          ["#8f917f", 11, "M330 490C380 620 450 680 510 730S580 880 595 1030S620 1160 660 1195"],
          ["#4b594e", 9, "M300 400C360 560 420 660 490 720S560 880 580 1010"],
          ["#6f8074", 7, "M440 140L420 300L470 480M310 500L420 720L500 880L540 1060M280 560L400 800L480 980"],
          ["#b9ab96", 14, "M650 1200C750 1210 880 1210 930 1190S1020 1140 1070 1115"],
          ["#a8a591", 12, "M640 1210L672 1280C800 1305 1000 1290 1100 1235S1180 1130 1155 1095"],
          ["#40534a", 8, "M620 420L690 650L705 800L690 1060L730 1150M690 470L740 560L800 720L870 870L1000 1000L1090 1050"],
          ["#c1b8a5", 14, "M695 0L790 220L880 430L950 520L1040 620"],
          ["#7e8c7f", 10, "M620 250L740 420L830 620L930 740"],
          ["#768679", 6, "M520 40L640 240L760 400M760 480L880 680L1040 860"],
          ["#17261f", 12, "M870 110L890 180L930 230L930 320M990 60L1020 150"],
          ["#5c6f63", 7, "M740 20L830 200L960 420L1040 560M790 20L880 260"],
          ["#99a090", 8, "M930 0L990 200L1080 400"],
          ["#7c8168", 40, "M1568 0C1360 50 1140 60 1135 190S1130 560 1150 700S1100 860 1120 930S1200 1080 1190 1240"],
          ["#b0ac9b", 8, "M1118 480L1120 640L1100 670L1060 640"],
          ["#d5cbbc", 36, "M1058 628L1070 640"],
          ["#aaa793", 12, "M1175 580L1220 660M1310 880L1330 980L1390 1080L1390 1180L1430 1330L1490 1480"],
          ["#14221c", 13, "M1325 735L1375 800L1385 880L1420 955"],
          ["#1d2c26", 14, "M1440 1045L1450 1110L1490 1240L1510 1300"],
          ["#838a76", 9, "M950 1551C1000 1460 1080 1360 1200 1340S1320 1480 1400 1551M1000 1551C1060 1440 1140 1400 1220 1410"],
          ["#6b7863", 7, "M1180 1340L1240 1370L1320 1450M0 1250L300 1250L640 1300M0 1290L900 1340L1100 1290"],
          ["#c0b5a1", 20, "M20 1320L400 1350L600 1380M300 1200L500 1230L640 1270"],
          ["#9ba192", 18, "M800 960L840 980M760 1040L790 1060M850 1020L870 1060M720 930L740 930M740 1130L800 1120"],
          ["#c4a998", 14, "M830 970L840 1000M483 265L488 285"],
        ]}
      />
    </g>
  );
}

function Terrain() {
  return (
    <svg viewBox="64.800 170 746 604.800" preserveAspectRatio="xMidYMid slice" className="absolute inset-0 h-full w-full" aria-hidden="true">
      <defs>
        <filter id="rough" x="0" y="0" width="1" height="1">
          <feGaussianBlur in="SourceGraphic" stdDeviation="1.100" result="soft" />
          <feTurbulence type="fractalNoise" baseFrequency="0.041" numOctaves="6" seed="7" result="n" />
          <feDisplacementMap in="soft" in2="n" scale="13" xChannelSelector="R" yChannelSelector="G" />
        </filter>
        <filter id="grain" x="0" y="0" width="1" height="1">
          <feTurbulence type="fractalNoise" baseFrequency="0.027 0.019" numOctaves="7" seed="21" />
          <feColorMatrix type="matrix" values="1.8 0 0 0 -0.4  1.8 0 0 0 -0.4  1.8 0 0 0 -0.4  0 0 0 0 1" />
        </filter>
      </defs>
      <g filter="url(#rough)">
        <rect x="40" y="140" width="800" height="660" fill="#6a796f" />
        <NorthWest />
        <NorthEast />
        <SouthWest />
        <SouthEast />
      </g>
      <rect x="64" y="169" width="748" height="607" filter="url(#grain)" className="opacity-40 mix-blend-soft-light" />
    </svg>
  );
}

type Marker = { x: number; y: number; tone: string; name?: string; value?: string };

const GREEN = "border-[#5ec39a] bg-[#5ec39a]/30";
const YELLOW = "border-[#fdf31a] bg-[#fdf31a]/20";

const markers: Marker[] = [
  { x: 1261, y: 1080, tone: "border-[#0a2a52] bg-[#0a2a52]/20" },
  { x: 1280, y: 1080, tone: GREEN },
  { x: 1389, y: 1080, tone: GREEN },
  { x: 1334, y: 1080, tone: GREEN, name: "Blast 016", value: "82.436 dBL" },
  { x: 1534, y: 970, tone: GREEN, name: "Blast 014", value: "76.405 dBL" },
  { x: 1498, y: 1079, tone: GREEN, name: "Blast 012", value: "75.763 dBL" },
  { x: 1608, y: 1079, tone: GREEN, name: "Blast 011", value: "76.290 dBL" },
  { x: 529, y: 1539, tone: "border-[#e1eaef] bg-white/10", name: "Blast 020", value: "Not Fired" },
  { x: 623, y: 1594, tone: GREEN, name: "Blast 022", value: "80.575 dBL" },
  { x: 714, y: 1648, tone: "border-[#ffc01a] bg-[#ffe11a]/25", name: "Blast 002", value: "97.466 dBL" },
  { x: 1097, y: 1591, tone: "border-[#ffe11a] bg-[#ffe11a]/25", name: "Blast 010", value: "89.628 dBL" },
  { x: 805, y: 1702, tone: YELLOW },
  { x: 824, y: 1702, tone: YELLOW },
  { x: 896, y: 1702, tone: YELLOW },
  { x: 842, y: 1702, tone: YELLOW, name: "Blast 006", value: "85.722 dBL" },
  { x: 951, y: 1702, tone: GREEN, name: "Blast 007", value: "79.645 dBL" },
  { x: 1061, y: 1702, tone: "border-[#ffa61a] bg-[#ffa61a]/25", name: "Blast 008", value: "103.505 dBL" },
  { x: 1170, y: 1702, tone: GREEN, name: "Blast 009", value: "77.188 dBL" },
];

const place = (x: number, y: number) => ({
  left: ((x - 158) / 1820) * 100 + "%",
  top: ((y - 415) / 1475) * 100 + "%",
});

const mapButton = "flex h-16 w-16 items-center justify-center rounded-lg bg-[#c2d3dc]";
const tag = "bg-white/60 px-0.5 text-xl leading-[22px] whitespace-nowrap text-[#222f38]";

function BlastMap() {
  return (
    <section aria-label="Blast map" className="relative min-h-0 flex-1 overflow-hidden bg-[#64736a]">
      <Terrain />
      {markers.map((m, i) => (
        <div
          key={i}
          style={place(m.x, m.y)}
          className={"absolute flex h-[68px] w-[68px] -translate-1/2 flex-col items-center justify-center gap-px rounded-full border-2 pb-2 " + CONDENSED + " " + m.tone}
        >
          {m.name && (
            <>
              <span className={tag}>{m.name}</span>
              <span className={tag}>{m.value}</span>
            </>
          )}
        </div>
      ))}
      <svg viewBox="0 0 46 56" style={place(1392, 602)} className="absolute h-14 w-[46px] -translate-1/2" aria-hidden="true">
        <path d="M23 55C14 45 0 36 0 22A23 22 0 0 1 46 22C46 36 32 45 23 55zM23 16a6 6 0 1 0 .01 0z" fill="#fff" fillRule="evenodd" />
      </svg>
      <div className="absolute bottom-[74px] left-[19px] flex flex-col gap-[18px]">
        <button type="button" aria-label="Measure" className={mapButton}>
          <svg viewBox="0 0 46 32" className="h-8 w-[46px]" aria-hidden="true">
            <path d="M1.500 0v13M44.500 0v13M4 6h38M9 2L4 6l5 4M37 2l5 4-5 4" fill="none" stroke="#31434f" strokeWidth="1.800" />
            <path d="M1 15h44v17H1z" fill="#31434f" />
            <path d="M7 15v7M12 15v9M17 15v7M22 15v9M27 15v7M32 15v9M37 15v7" stroke="#c2d3dc" strokeWidth="1.800" />
          </svg>
        </button>
        <button type="button" aria-label="Layers" className={mapButton}>
          <svg viewBox="0 0 46 46" className="h-[46px] w-[46px]" fill="#31434f" aria-hidden="true">
            <path d="M23 1L45 11.500 23 22 1 11.500zM7 17.500L23 25.500 39 17.500 45 21.500 23 33 1 21.500zM7 28.500L23 36.500 39 28.500 45 33 23 45 1 33z" />
          </svg>
        </button>
        <button type="button" aria-label="Visibility" className={mapButton}>
          <svg viewBox="0 0 46 30" className="h-[30px] w-[46px]" aria-hidden="true">
            <path d="M0 15Q9 1 23 1T46 15Q37 29 23 29T0 15z" fill="#31434f" />
            <circle cx="23" cy="15" r="10" fill="none" stroke="#c2d3dc" strokeWidth="2.500" />
            <path d="M17 15a6 6 0 0 1 6-6" fill="none" stroke="#c2d3dc" strokeWidth="3" />
          </svg>
        </button>
      </div>
      <a href="#mapbox" className="absolute bottom-4 left-4 flex items-center gap-1 leading-9 text-white">
        <svg viewBox="0 0 36 36" className="h-9 w-9" aria-hidden="true">
          <circle cx="18" cy="18" r="17.500" fill="#fff" />
          <path d="M9 27q-3-18 10-19a9.500 9.500 0 0 1 2 19q-6 1-12 0z" fill="#31434f" />
          <path d="M19.500 11l2 4.500 4.500 2-4.500 2-2 4.500-2-4.500-4.500-2 4.500-2z" fill="#fff" />
        </svg>
        <span className="font-['Open_Sans',sans-serif] text-[30px] font-semibold">mapbox</span>
      </a>
      <p className="absolute right-0 bottom-0 bg-white/50 pr-2.5 pl-3.5 text-[28px] leading-[38px] whitespace-nowrap text-[#333333]">
        <a href="#mb">© Mapbox</a> <a href="#osm">© OpenStreetMap</a>{" "}
        <a href="#improve" className="font-bold">Improve this map</a> <a href="#maxar">© Maxar</a>
      </p>
    </section>
  );
}

/* ---------- charts ---------- */

type Bar = { v: number; fill: string };
const g = (v: number): Bar => ({ v, fill: "#5ec399" });

type ChartSpec = {
  title: string;
  active?: boolean;
  yLabel: string;
  yLabelX: number;
  x0: number;
  perUnit: number;
  ticks: number[];
  alert: number;
  limit: number;
  bars: Bar[];
  bands: [string, string, string][];
};

const vibration: ChartSpec = {
  title: "Ground Vibration (mm/s)",
  yLabel: "VPPV (mm/s)",
  yLabelX: 20,
  x0: 83,
  perUnit: 297.6,
  ticks: [0, 0.5, 1, 1.5],
  alert: 0.8,
  limit: 1.6,
  bars: [0.445, 0.622, 0.396, 0, 0.489, 0.339, 0.547, 0.526, 0.51, 0.388, 0.433, 0.368, 0.593, 0.48, 0.585, 0.428, 0.375, 0.633, 0].map(g),
  bands: [
    ["> 1.6 mm/s", "0%", "0 blasts"],
    ["0.8 - 1.6 mm/s", "0%", "0 blasts"],
    ["≤ 0.8 mm/s", "100%", "17 blasts"],
  ],
};

const pressure: ChartSpec = {
  title: "Air Over Pressure (dBL)",
  active: true,
  yLabel: "AOP (dBL)",
  yLabelX: 36,
  x0: 104,
  perUnit: 4.34,
  ticks: [0, 20, 40, 60, 80, 100],
  alert: 85,
  limit: 110,
  bars: [
    { v: 89.9, fill: "#ffe11a" },
    { v: 89.6, fill: "#ffe21a" },
    { v: 85.7, fill: "#fff31a" },
    g(0),
    g(75.763),
    g(76.29),
    g(82.2),
    g(78.7),
    g(76.405),
    g(82.436),
    { v: 89.628, fill: "#ffe21a" },
    g(77.188),
    { v: 103.505, fill: "#ffa61a" },
    g(79.645),
    { v: 85.722, fill: "#fff31a" },
    g(77.4),
    { v: 97.466, fill: "#ffc01a" },
    g(80.575),
    g(0),
  ],
  bands: [
    ["> 110.0 dBL", "0%", "0 blasts"],
    ["85.0 - 110.0 dBL", "41.2%", "7 blasts"],
    ["≤ 85.0 dBL", "58.8%", "10 blasts"],
  ],
};

const bandTones = [
  "bg-[#c8300c] border-[#b02a0a]",
  "bg-linear-to-b from-[#ff8a1e] to-[#fff31a] border-[#e0a81e]",
  "bg-[#5ec399] border-[#4fae88]",
];

function Plot({ c }: { c: ChartSpec }) {
  const right = 1521;
  const zero = 581;
  const slot = (right - c.x0) / c.bars.length;
  const y = (v: number) => zero - v * c.perUnit;
  const mid = (c.x0 + right) / 2;
  return (
    <svg viewBox="0 -2 1569 648" className={"min-h-0 min-w-0 flex-1 text-[23px] " + CONDENSED} fill="#444" role="img" aria-label={c.title}>
      {c.ticks.map((t) => (
        <g key={t}>
          {t > 0 && <path d={`M${c.x0} ${y(t)}H${right}`} stroke="#eeeeee" strokeWidth="2" />}
          <text x={c.x0 - 7} y={y(t) + 8} textAnchor="end">{t}</text>
        </g>
      ))}
      {c.bars.map((b, i) => (
        <g key={i}>
          {b.v > 0 && <rect x={c.x0 + slot * (i + 0.1)} y={y(b.v)} width={slot * 0.8} height={b.v * c.perUnit} fill={b.fill} />}
          <path d={`M${c.x0 + slot * (i + 0.5)} ${zero + 8}v9`} stroke="#444" strokeWidth="2" />
        </g>
      ))}
      <path d={`M${c.x0} ${zero}H${right}`} stroke="#444" strokeWidth="2" />
      <path d={`M${c.x0} ${y(c.limit)}H${right}`} stroke="#ff4a26" strokeWidth="2.500" strokeDasharray="28.100 28.100" />
      <path d={`M${c.x0} ${y(c.alert)}H${right}`} stroke="#000" strokeWidth="2" strokeDasharray="5.600 5.600" />
      <path d="M1273 58H1326" stroke="#000" strokeWidth="2" strokeDasharray="5.600 5.600" />
      <text x="1340" y="67">Alert</text>
      <path d="M1401 58H1430" stroke="#ff4a26" strokeWidth="2.500" />
      <text x="1467" y="67">Limit</text>
      <text x={mid} y="627" textAnchor="middle">Blasts</text>
      <text transform={`translate(${c.yLabelX + 7} 341) rotate(-90)`} textAnchor="middle">{c.yLabel}</text>
      {c.active && (
        <g className="text-[22px]">
          <path d="M1077 76H1382V188H1077V144L1066 132L1077 121Z" fill="#d6e0e7" stroke="#444" strokeWidth="2" />
          <text x="1084" y="103"><tspan fontWeight="700">Blast Name</tspan>: Blast 008</text>
          <text x="1084" y="140"><tspan fontWeight="700">Fired Date</tspan>: 2025-05-14 09:10 AM</text>
          <text x="1084" y="176"><tspan fontWeight="700">AOP</tspan>: 103.505 dBL</text>
        </g>
      )}
    </svg>
  );
}

function Panel({ c }: { c: ChartSpec }) {
  return (
    <section className={"flex min-h-0 flex-1 flex-col rounded-lg border-3 " + (c.active ? "border-[#0099cc]" : "border-[#dddddd]")}>
      <div className="flex h-[76px] shrink-0 items-center justify-between border-b border-[#7d8a93] px-7">
        <h2 className={"text-[32px] font-bold " + (c.active ? "text-[#0099cc]" : "text-[#31434f]")}>{c.title}</h2>
        <span className="text-[28px]">17 Blasts with data | 89%</span>
      </div>
      <div className="flex min-h-0 flex-1">
        <ul className="flex w-[245px] shrink-0 flex-col gap-[15px] pt-[22px] pb-5 pl-[35px]">
          {c.bands.map(([range, pct, count], i) => (
            <li key={range} className="flex flex-1 gap-[29px]">
              <span className={"w-[30px] rounded-lg border " + bandTones[i]} />
              <div className="flex flex-col justify-center text-[21px] leading-[60px] whitespace-nowrap">
                <span>{range}</span>
                <strong className="text-4xl leading-[60px]">{pct}</strong>
                <span>{count}</span>
              </div>
            </li>
          ))}
        </ul>
        <Plot c={c} />
      </div>
    </section>
  );
}

/* ---------- page ---------- */

export default function App() {
  return (
    <div className={"flex h-screen flex-col bg-white text-[#31434f] " + FONT}>
      <Header />
      <div className="flex min-h-0 flex-1">
        <Sidebar />
        <main className="flex min-w-0 flex-1 flex-col">
          <Filters />
          <div className="grid min-h-0 flex-1 grid-cols-2 gap-3.5 px-3.5 pt-3.5 pb-2">
            <div className="flex min-h-0 flex-col gap-[21px]">
              <div className="flex h-[87px] shrink-0 items-center rounded-lg border border-[#6c757d] pl-[19px]">
                <svg viewBox="0 0 34 42" className="h-[42px] w-[34px]" aria-hidden="true">
                  <path d="M17 41C12 33 1 26 1 16.500A16 16 0 0 1 33 16.500C33 26 22 33 17 41zM17 9.500a6.500 6.500 0 1 0 .01 0z" fill="#31434f" fillRule="evenodd" />
                </svg>
                <span className="ml-2.5 text-[28px]">House</span>
                <span className="ml-4 text-[22px]">[8322, 10697]</span>
                <button type="button" aria-label="Choose monitor" className="ml-auto">
                  <Chevron />
                </button>
              </div>
              <BlastMap />
            </div>
            <div className="flex min-h-0 flex-col gap-[21px]">
              <div className="grid h-[87px] shrink-0 grid-cols-2 items-center rounded-lg border border-[#6c757d] text-center text-[28px]">
                <p className="pl-6"><b>19 Blasts</b> 18 Fired | 1 Open</p>
                <p><b>17 Blasts</b> with data | 89%</p>
              </div>
              <div className="flex min-h-0 flex-1 flex-col gap-[15px]">
                <Panel c={vibration} />
                <Panel c={pressure} />
              </div>
            </div>
          </div>
        </main>
      </div>
    </div>
  );
}
